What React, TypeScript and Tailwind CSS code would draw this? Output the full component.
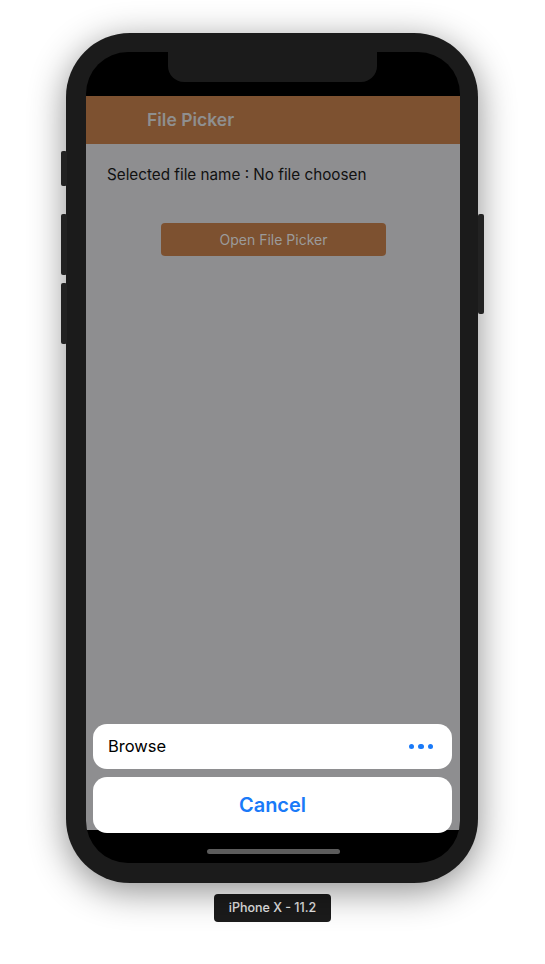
import { ReactNode } from 'react';

const font = { fontFamily: 'Inter, "Liberation Sans", sans-serif' };

function SideButton({ className }: { className: string }) {
  return <div className={`absolute w-[6px] rounded-[2px] bg-[#222] ${className}`} />;
}

function ActionCard({ children, className }: { children: ReactNode; className?: string }) {
  return (
    <div className={`flex items-center rounded-[14px] bg-white ${className ?? ''}`}>
      {children}
    </div>
  );
}

export default function App() {
  return (
    <div className="min-h-[964px] w-[545px] bg-white pt-[33px]" style={font}>
      {/* phone */}
      <div className="relative ml-[66px] h-[850px] w-[412px] rounded-[64px] bg-[#1b1b1b] pb-[20px] pl-[20px] pr-[18px] pt-[19px] shadow-[0_8px_36px_rgba(0,0,0,0.45)]">
        <SideButton className="left-[-5px] top-[118px] h-[35px]" />
        <SideButton className="left-[-5px] top-[181px] h-[61px]" />
        <SideButton className="left-[-5px] top-[250px] h-[61px]" />
        <SideButton className="right-[-6px] top-[181px] h-[100px]" />

        {/* screen */}
        <div className="relative flex h-full flex-col overflow-hidden rounded-[42px] bg-black">
          {/* notch */}
          <div className="absolute left-[82px] top-0 h-[30px] w-[209px] rounded-b-[16px] bg-[#1b1b1b]" />

          <div className="h-[44px] shrink-0" />
          <div className="flex h-[48px] shrink-0 items-center bg-[#7d5130] pl-[61px]">
            <span className="mt-[1px] text-[17.5px] font-semibold text-[#8f8f8f]">File Picker</span>
          </div>

          <div className="flex flex-1 flex-col bg-[#8e8e90]">
            <p className="mt-[21px] pl-[21px] text-[15.25px] leading-[20px] text-[#111]">
              Selected file name : No file choosen
            </p>
            <div className="mt-[38px] flex justify-center">
              <button className="ml-[1px] h-[33px] w-[225px] rounded-[4px] bg-[#7d5130] text-[14px] text-[#9b9b9b]">
                Open File Picker
              </button>
            </div>

            <div className="mt-auto flex flex-col gap-[8px] pl-[7px] pr-[8px]">
              <ActionCard className="h-[45px] justify-between pl-[15px] pr-[19px]">
                <span className="text-[16.5px] text-black">Browse</span>
                <span className="flex gap-[4px]">
                  <span className="h-[5.5px] w-[5.5px] rounded-full bg-[#1a7af8]" />
                  <span className="h-[5.5px] w-[5.5px] rounded-full bg-[#1a7af8]" />
                  <span className="h-[5.5px] w-[5.5px] rounded-full bg-[#1a7af8]" />
                </span>
              </ActionCard>
              <ActionCard className="relative mb-[-3px] h-[56px] justify-center">
                <span className="text-[20px] font-semibold text-[#1a7af8]">Cancel</span>
              </ActionCard>
            </div>
          </div>

          {/* home indicator area */}
          <div className="flex h-[33px] shrink-0 items-center justify-center">
            <div className="mt-[10px] h-[5px] w-[133px] rounded-full bg-[#5c5c5c]" />
          </div>
        </div>
      </div>

      <div className="mt-[11px] flex justify-center">
        <div className="flex h-[28px] w-[117px] items-center justify-center rounded-[4px] bg-[#1b1b1b] pt-[1px] text-[12.5px] font-medium text-[#e5e5e5]">
          iPhone X - 11.2
        </div>
      </div>
    </div>
  );
}
